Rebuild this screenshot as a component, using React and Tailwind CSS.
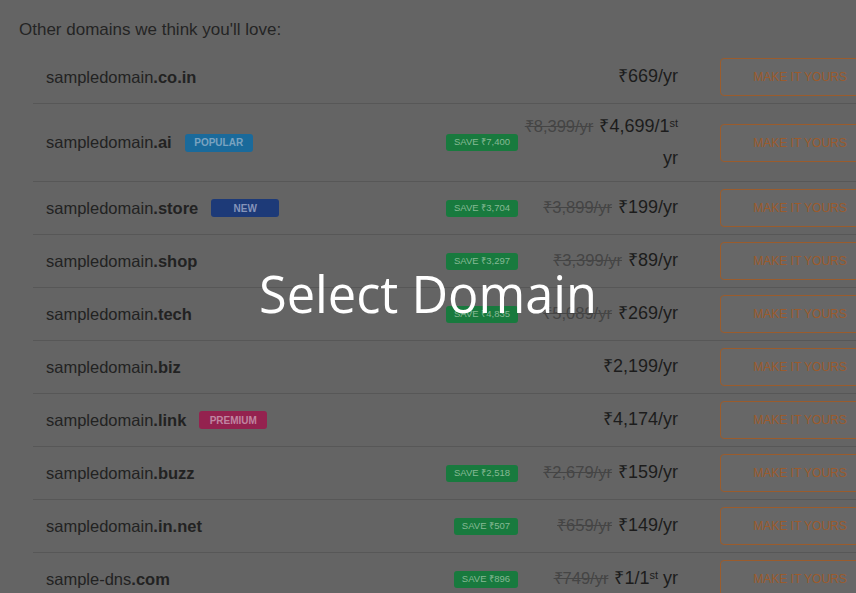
import React from 'react';

const rows = [
  { name: 'sampledomain', tld: '.co.in', price: '₹669' },
  { name: 'sampledomain', tld: '.ai', tag: 'POPULAR', save: '₹7,400', old: '₹8,399/yr', price: '₹4,699', first: true },
  { name: 'sampledomain', tld: '.store', tag: 'NEW', save: '₹3,704', old: '₹3,899/yr', price: '₹199' },
  { name: 'sampledomain', tld: '.shop', save: '₹3,297', old: '₹3,399/yr', price: '₹89' },
  { name: 'sampledomain', tld: '.tech', save: '₹4,835', old: '₹5,089/yr', price: '₹269' },
  { name: 'sampledomain', tld: '.biz', price: '₹2,199' },
  { name: 'sampledomain', tld: '.link', tag: 'PREMIUM', price: '₹4,174' },
  { name: 'sampledomain', tld: '.buzz', save: '₹2,518', old: '₹2,679/yr', price: '₹159' },
  { name: 'sampledomain', tld: '.in.net', save: '₹507', old: '₹659/yr', price: '₹149' },
  { name: 'sample-dns', tld: '.com', save: '₹896', old: '₹749/yr', price: '₹1', first: true },
];

const tagStyles = {
  POPULAR: 'bg-[#1a6a9b] text-[#7aa3c0]',
  NEW: 'bg-[#1d3a78] text-[#8594ba]',
  PREMIUM: 'bg-[#94224f] text-[#c085a1]',
};

function Price({ row }) {
  return (
    <div className="w-[158px] text-right leading-[31.5px]">
      <span className="whitespace-nowrap">
        {row.old && (
          <span className="text-[16.5px] text-[#454545] line-through mr-[6px]">{row.old}</span>
        )}
        <span className="text-[18px] text-[#1c1c1c]">
          {row.price}
          {row.first ? (
            <>
              /1<sup className="text-[11px] leading-[0]">st</sup>
            </>
          ) : (
            '/yr'
          )}
        </span>
      </span>
      {row.first && <span className="text-[18px] text-[#1c1c1c]"> yr</span>}
    </div>
  );
}

function Row({ row }) {
  return (
    <div className="flex items-center w-[847px] py-[7px] border-b border-[#575757]">
      <div className="flex-1 flex items-center pl-[13px]">
        <span className="text-[16.5px] text-[#222]">
          {row.name}
          <span className="font-bold">{row.tld}</span>
        </span>
        {row.tag && (
          <span
            className={`ml-[13px] w-[68px] h-[18px] rounded-[3px] flex items-center justify-center text-[10px] font-bold ${tagStyles[row.tag]}`}
          >
            {row.tag}
          </span>
        )}
      </div>
      {row.save && (
        <span className="mr-[2px] h-[17px] px-[8px] rounded-[3px] flex items-center bg-[#187a3e] text-[#86b995] text-[9.5px]">
          SAVE {row.save}
        </span>
      )}
      <Price row={row} />
      <button className="ml-[42px] w-[160px] h-[38px] rounded-[4px] border border-[#9a5c2d] bg-[#676767] text-[12px] text-[#9c5b2c]">
        MAKE IT YOURS
      </button>
    </div>
  );
}

export default function App() {
  return (
    <div className="relative h-[593px] w-full overflow-hidden bg-[#646464] font-['Liberation_Sans',Arial,sans-serif]">
      <div className="w-[900px] pl-[19px] pt-[20px]">
        <p className="text-[17px] leading-[20px] text-[#242424]">Other domains we think you'll love:</p>
        <div className="mt-[11px] ml-[14px]">
          {rows.map((r, i) => (
            <Row key={i} row={r} />
          ))}
        </div>
      </div>
      <div className="absolute inset-0 flex items-center justify-center pb-[4px]">
        <span className="text-white text-[50.5px] font-['Open_Sans','Noto_Sans',sans-serif] leading-none">
          Select Domain
        </span>
      </div>
    </div>
  );
}
